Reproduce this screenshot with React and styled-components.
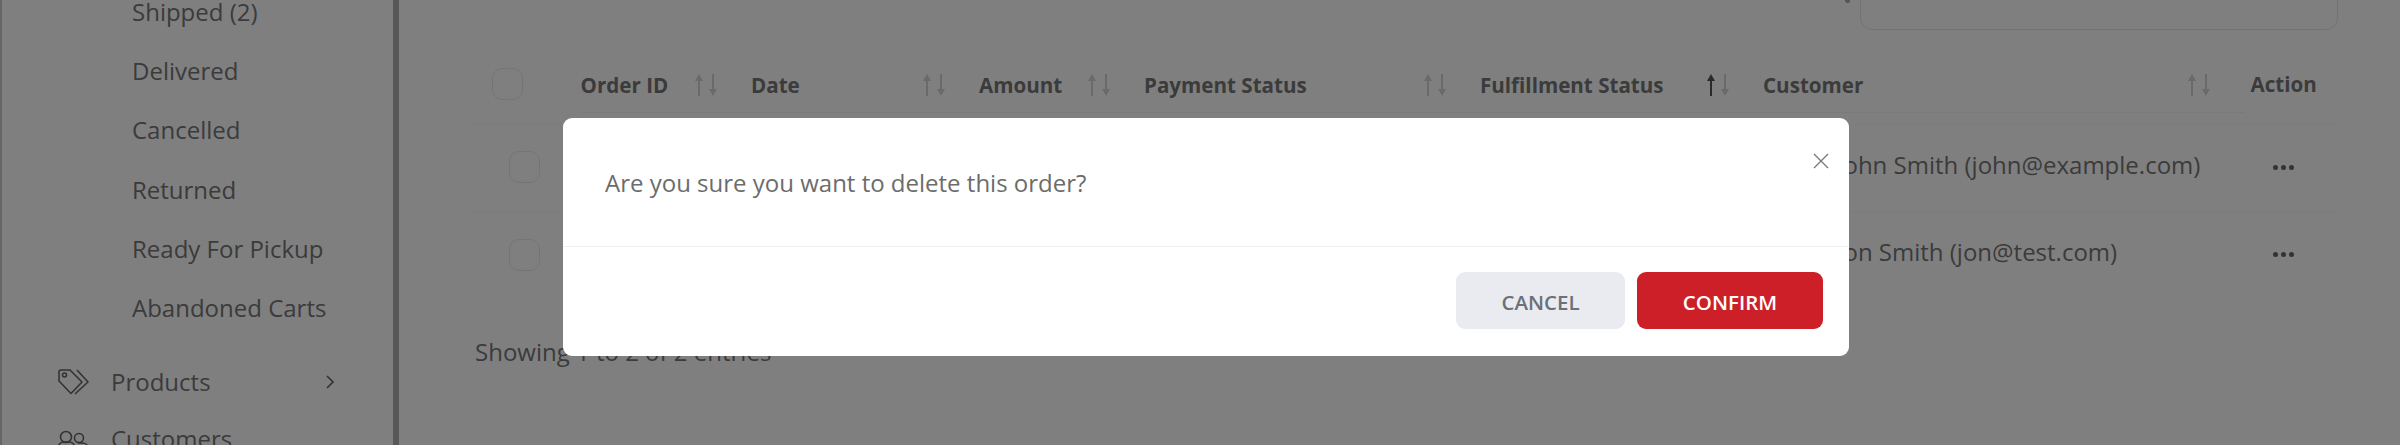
import styled, { createGlobalStyle } from "styled-components";

const GlobalStyle = createGlobalStyle`
  html, body {
    margin: 0;
    padding: 0;
    background: #fff;
  }
  body {
    font-family: "Open Sans", "Noto Sans", sans-serif;
  }
`;

const Page = styled.div`
  display: flex;
  width: 2400px;
  height: 445px;
  overflow: hidden;
  background: #fff;
  border-left: 2px solid #ccc;
  box-sizing: border-box;
`;

const Sidebar = styled.aside`
  flex: 0 0 397px;
  height: 445px;
  box-sizing: border-box;
  border-right: 6px solid #b0b0b0;
`;

const SubMenu = styled.ul`
  list-style: none;
  margin: -18px 0 0;
  padding: 0 0 0 130px;
`;

const SubItem = styled.li`
  height: 59.2px;
  line-height: 59.2px;
  font-size: 24px;
  color: #777;
  white-space: nowrap;
`;

const MenuItem = styled.div`
  display: flex;
  align-items: center;
  height: 57px;
  padding-left: 55px;
  font-size: 24px;
  color: #777;
  margin-top: ${(p) => p.$top || 0}px;

  svg.lead {
    flex: 0 0 32px;
    margin-right: 22px;
  }
  svg.chev {
    margin-left: 114px;
  }
`;

const Main = styled.main`
  flex: 1;
  padding: 0 62px 0 72px;
  min-width: 0;
`;

const Toolbar = styled.div`
  display: flex;
  justify-content: flex-end;
  align-items: flex-start;
  height: 30px;
`;

const Mark = styled.span`
  width: 5px;
  height: 3px;
  margin-right: 10px;
  border-radius: 0 0 3px 3px;
  background: #aaa;
`;

const SearchBox = styled.div`
  width: 478px;
  height: 60px;
  margin-top: -30px;
  box-sizing: border-box;
  border: 1.5px solid #e4e4e4;
  border-radius: 12px;
`;

const Table = styled.div`
  margin-top: 30px;
  width: 1864.5px;
`;

const Row = styled.div`
  display: grid;
  grid-template-columns: 109.5px 170.5px 228px 165px 336px 283px 480.5px 92px;
  align-items: ${(p) => (p.$head ? "start" : "center")};
  height: ${(p) => (p.$head ? 65 : 87)}px;
  border-bottom: ${(p) => (p.$last ? "none" : "1.5px solid #f8f8f8")};
  box-sizing: border-box;
  font-size: 24px;
  color: #777;
`;

const Box = styled.span`
  display: block;
  width: 31px;
  height: 32px;
  box-sizing: border-box;
  border: 1.5px solid #e8e8e8;
  border-radius: 10px;
  margin: ${(p) => (p.$head ? "8px 0 0 21px" : "0 0 2px 38px")};
`;

const HeadCell = styled.div`
  display: flex;
  align-items: center;
  justify-content: space-between;
  height: 53px;
  box-sizing: border-box;
  border-bottom: 1.5px solid #f4f4f4;
  font-size: 20.6px;
  font-weight: 700;
  color: #777;
  white-space: nowrap;
  padding: 0 33px 3px 0;
`;

const ActionHead = styled(HeadCell)`
  border-bottom: 0;
  padding: 0 0 5px 7px;
`;

const Cell = styled.div`
  white-space: nowrap;
`;

const CustomerCell = styled(Cell)`
  padding: 0 0 8px 74px;
`;

const Dots = styled.div`
  display: flex;
  gap: 3px;
  padding: 0 0 2px 29px;

  span {
    width: 5px;
    height: 5px;
    border-radius: 50%;
    background: #666;
  }
`;

const Entries = styled.div`
  margin-top: 36px;
  padding-left: 4px;
  font-size: 24px;
  color: #777;
`;

const Overlay = styled.div`
  position: fixed;
  inset: 0;
  background: rgba(0, 0, 0, 0.5);
  padding: 118px 0 0 563px;
`;

const Dialog = styled.div`
  position: relative;
  width: 1286px;
  height: 238px;
  background: #fff;
  border-radius: 9px;
`;

const DialogBody = styled.div`
  height: 129px;
  box-sizing: border-box;
  padding: 43px 42px 0;
  font-size: 24px;
  line-height: 44px;
  color: #6c6c6c;
  border-bottom: 1.5px solid #f0f0f0;
`;

const CloseButton = styled.button`
  position: absolute;
  top: 35px;
  right: 20px;
  width: 16px;
  height: 16px;
  padding: 0;
  border: 0;
  background: none;
  color: #777;
`;

const DialogFooter = styled.div`
  display: flex;
  justify-content: flex-end;
  gap: 12px;
  padding: 25px 26px 0 0;
`;

const Button = styled.button`
  height: 57px;
  width: ${(p) => (p.$primary ? 186 : 169)}px;
  padding: 2px 0 0;
  border: 0;
  border-radius: 9px;
  font-family: inherit;
  font-size: 20.5px;
  font-weight: 600;
  background: ${(p) => (p.$primary ? "#cd1f27" : "#e9ebf0")};
  color: ${(p) => (p.$primary ? "#fff" : "#6b7079")};
`;

const SortIcon = ({ active }) => (
  <svg width="24" height="24" viewBox="0 0 24 24" fill="none">
    <path d="M5 23V3" stroke={active ? "#555" : "#d4d4d4"} strokeWidth="2" />
    <path d="M1 8l4-7 4 7z" fill={active ? "#555" : "#d4d4d4"} />
    <path d="M19 1v20" stroke="#d4d4d4" strokeWidth="2" />
    <path d="M15 16l4 7 4-7z" fill="#d4d4d4" />
  </svg>
);

const TagIcon = () => (
  <svg className="lead" width="32" height="26" viewBox="0 0 32 26" fill="none" stroke="#666" strokeWidth="1.6" strokeLinejoin="round">
    <path d="M2 3a2 2 0 0 1 2-2h9l12 12-11 11.5L2 12z" />
    <circle cx="7.5" cy="6" r="2" />
    <path d="M20 1l11 12-13 12" />
  </svg>
);

const UsersIcon = () => (
  <svg className="lead" width="32" height="28" viewBox="0 0 32 28" fill="none" stroke="#666" strokeWidth="1.6">
    <circle cx="9" cy="12" r="5.5" />
    <circle cx="22" cy="13" r="4.5" />
    <path d="M1.5 27v-5a5 5 0 0 1 5-5h6a5 5 0 0 1 5 5v5" />
    <path d="M21 18h5a4.5 4.5 0 0 1 4.5 4.5V27" />
  </svg>
);

const Chevron = () => (
  <svg className="chev" width="10" height="14" viewBox="0 0 10 14" fill="none" stroke="#666" strokeWidth="1.7">
    <path d="M2 1l6 6-6 6" />
  </svg>
);

const XIcon = () => (
  <svg width="16" height="16" viewBox="0 0 16 16" fill="none" stroke="currentColor" strokeWidth="1.3">
    <path d="M1 1l14 14M15 1L1 15" />
  </svg>
);

const subItems = ["Shipped (2)", "Delivered", "Cancelled", "Returned", "Ready For Pickup", "Abandoned Carts"];

const headers = [
  { label: "Order ID" },
  { label: "Date" },
  { label: "Amount" },
  { label: "Payment Status" },
  { label: "Fulfillment Status", active: true },
  { label: "Customer" },
];

const orders = ["John Smith (john@example.com)", "Jon Smith (jon@test.com)"];

export default function App() {
  return (
    <>
      <GlobalStyle />
      <Page>
        <Sidebar>
          <SubMenu>
            {subItems.map((item) => (
              <SubItem key={item}>{item}</SubItem>
            ))}
          </SubMenu>
          <MenuItem $top={16}>
            <TagIcon />
            Products
            <Chevron />
          </MenuItem>
          <MenuItem>
            <UsersIcon />
            Customers
          </MenuItem>
        </Sidebar>
        <Main>
          <Toolbar>
            <Mark />
            <SearchBox />
          </Toolbar>
          <Table>
            <Row $head>
              <Box $head />
              {headers.map((h) => (
                <HeadCell key={h.label}>
                  {h.label}
                  <SortIcon active={h.active} />
                </HeadCell>
              ))}
              <ActionHead>Action</ActionHead>
            </Row>
            {orders.map((customer, i) => (
              <Row key={customer} $last={i === orders.length - 1}>
                <Box />
                <Cell />
                <Cell />
                <Cell />
                <Cell />
                <Cell />
                <CustomerCell>{customer}</CustomerCell>
                <Dots>
                  <span />
                  <span />
                  <span />
                </Dots>
              </Row>
            ))}
          </Table>
          <Entries>Showing 1 to 2 of 2 entries</Entries>
        </Main>
      </Page>
      <Overlay>
        <Dialog>
          <DialogBody>Are you sure you want to delete this order?</DialogBody>
          <CloseButton aria-label="Close">
            <XIcon />
          </CloseButton>
          <DialogFooter>
            <Button>CANCEL</Button>
            <Button $primary>CONFIRM</Button>
          </DialogFooter>
        </Dialog>
      </Overlay>
    </>
  );
}
